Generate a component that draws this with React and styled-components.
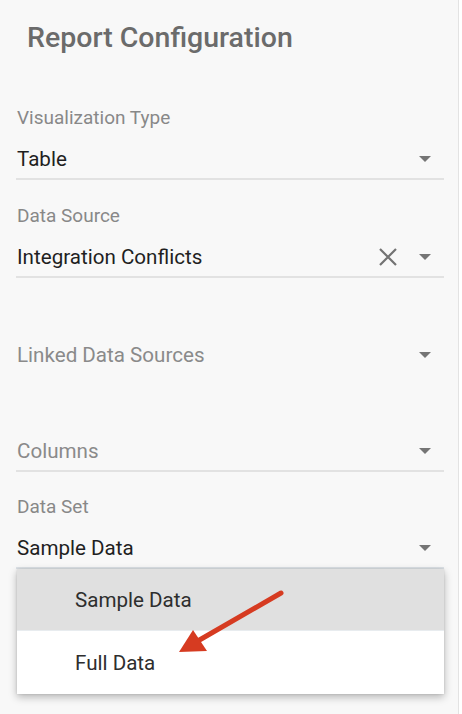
import React from "react";
import styled, { createGlobalStyle } from "styled-components";

const GlobalStyle = createGlobalStyle`
  html, body {
    margin: 0;
    padding: 0;
    background: #ffffff;
    font-family: Roboto, "Liberation Sans", sans-serif;
  }
`;

const Page = styled.div`
  display: flex;
  width: 462px;
  height: 714px;
  overflow: hidden;
`;

const Panel = styled.div`
  position: relative;
  width: 458px;
  height: 714px;
  background: #f8f8f8;
  border-right: 1px solid #e3e3e3;
`;

const Title = styled.h1`
  margin: 0;
  padding: 23px 0 0 27px;
  font-size: 28.5px;
  line-height: 30px;
  font-weight: 500;
  color: #6b6b6b;
`;

const Form = styled.div`
  display: flex;
  flex-direction: column;
  width: 428px;
  margin: 29px 0 0 16px;
`;

const Field = styled.div`
  position: relative;
  display: flex;
  flex-direction: column;
  padding-top: ${({ $top }) => $top}px;
`;

const Label = styled.div`
  height: 24px;
  padding-left: 1px;
  font-size: 19px;
  line-height: 24px;
  color: #888888;
`;

const ValueRow = styled.div`
  display: flex;
  align-items: center;
  margin-top: 14.5px;
  padding: 0 13px 5.5px 1px;
  height: 28px;
  border-bottom: ${({ $line }) => ($line ? `2px solid ${$line}` : "none")};
`;

const Value = styled.span`
  flex: 1;
  font-size: 20.6px;
  line-height: 28px;
  color: ${({ $placeholder }) => ($placeholder ? "#8a8a8a" : "#1f1f1f")};
`;

const Caret = styled.span`
  width: 0;
  height: 0;
  border-left: 6.5px solid transparent;
  border-right: 6.5px solid transparent;
  border-top: 6px solid #757575;
  margin-top: 1px;
`;

const Clear = styled.svg`
  width: 20px;
  height: 20px;
  margin-right: 21px;
`;

const Menu = styled.ul`
  position: absolute;
  top: 100%;
  left: 1px;
  right: 0;
  margin: 0;
  padding: 0;
  list-style: none;
  background: #ffffff;
  box-shadow: 0 3px 8px rgba(0, 0, 0, 0.28), 0 0 2px rgba(0, 0, 0, 0.12);
  z-index: 2;
`;

const Option = styled.li`
  height: ${({ $h }) => $h}px;
  display: flex;
  align-items: center;
  padding-left: 58px;
  font-size: 20.6px;
  color: #2e2e2e;
  background: ${({ $active }) => ($active ? "#e0e0e0" : "#ffffff")};
  border-bottom: ${({ $active }) => ($active ? "1px solid #e8ecef" : "none")};
`;

const Pointer = styled.svg`
  position: absolute;
  left: 0;
  top: 0;
  width: 458px;
  height: 714px;
  pointer-events: none;
  z-index: 3;
`;

const XIcon = () => (
  <Clear viewBox="0 0 20 20">
    <path
      d="M2 2 L18 18 M18 2 L2 18"
      stroke="#737373"
      strokeWidth="2.2"
      fill="none"
    />
  </Clear>
);

export default function App() {
  return (
    <>
      <GlobalStyle />
      <Page>
        <Panel>
          <Title>Report Configuration</Title>
          <Form>
            <Field $top={24}>
              <Label>Visualization Type</Label>
              <ValueRow $line="#e2e2e2">
                <Value>Table</Value>
                <Caret />
              </ValueRow>
            </Field>
            <Field $top={24}>
              <Label>Data Source</Label>
              <ValueRow $line="#e2e2e2">
                <Value>Integration Conflicts</Value>
                <XIcon />
                <Caret />
              </ValueRow>
            </Field>
            <Field $top={24}>
              <Label />
              <ValueRow>
                <Value $placeholder>Linked Data Sources</Value>
                <Caret />
              </ValueRow>
            </Field>
            <Field $top={24}>
              <Label />
              <ValueRow $line="#e2e2e2">
                <Value $placeholder>Columns</Value>
                <Caret />
              </ValueRow>
            </Field>
            <Field $top={23}>
              <Label>Data Set</Label>
              <ValueRow $line="#dde2e7">
                <Value>Sample Data</Value>
                <Caret />
              </ValueRow>
              <Menu>
                <Option $active $h={61}>Sample Data</Option>
                <Option $h={63}>Full Data</Option>
              </Menu>
            </Field>
          </Form>
          <Pointer viewBox="0 0 458 714">
            <line
              x1="281"
              y1="593"
              x2="196"
              y2="642"
              stroke="#d63b21"
              strokeWidth="5"
              strokeLinecap="round"
            />
            <polygon points="179,652 193,630 207,651" fill="#d63b21" />
          </Pointer>
        </Panel>
      </Page>
    </>
  );
}
